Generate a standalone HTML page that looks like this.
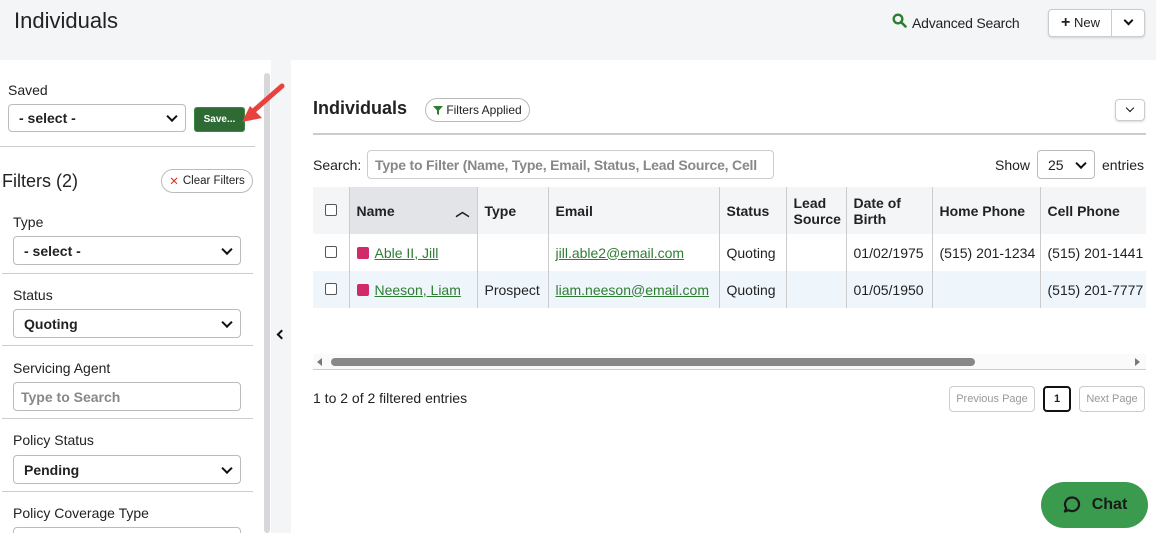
<!DOCTYPE html>
<html style="width:1156px;height:533px;overflow:hidden"><head><style>
*{box-sizing:border-box;margin:0;padding:0}
body{width:1156px;height:533px;overflow:hidden;background:#f4f5f7;font-family:"Liberation Sans",sans-serif;color:#222;position:relative;font-size:14px}
.a{position:absolute}
.sel{position:absolute;border:1px solid #bbb;border-radius:4px;background:#fff;font-weight:bold;font-size:14px;padding-left:10px;display:flex;align-items:center}
.sel:after{content:"";position:absolute;right:9px;top:50%;width:6px;height:6px;border-right:2px solid #111;border-bottom:2px solid #111;transform:translateY(-70%) rotate(45deg)}
.lbl{position:absolute;font-size:14px;color:#222}
.hr{position:absolute;height:1px;background:#ccc}
table{table-layout:fixed}
th,td{font-size:14px;text-align:left;padding:0 7px;border-left:1px solid #ccc;white-space:nowrap;overflow:hidden}
th{background:#f4f5f7;font-weight:bold;height:47px;line-height:16px}
td{height:37px}
tr.alt td{background:#eef6fc}
a{color:#2e7d32;text-decoration:underline}
.cb{display:inline-block;width:12px;height:12px;border:1px solid #555;border-radius:2px;background:#fff}
.sq{display:inline-block;width:12px;height:12px;background:#d12a6b;border-radius:2px;vertical-align:-1px;margin-right:6px}
.btn{position:absolute;border:1px solid #ccc;border-radius:4px;background:#fff;font-size:11px;color:#999;display:flex;align-items:center;justify-content:center}
</style></head><body>
<div class="a" style="left:14px;top:8px;font-size:22px;color:#222">Individuals</div>
<svg class="a" style="left:892px;top:13px" width="15" height="15" viewBox="0 0 15 15"><circle cx="6" cy="6" r="4.3" fill="none" stroke="#2e7d32" stroke-width="2.4"/><path d="M9 9l4.5 4.5" stroke="#2e7d32" stroke-width="2.6" stroke-linecap="round"/></svg>
<div class="a" style="left:912px;top:15px;font-size:14px;letter-spacing:-0.2px">Advanced Search</div>
<div class="a" style="left:1048px;top:9px;width:97px;height:28px;border:1px solid #ccc;border-radius:4px;background:#fff;box-shadow:0 1px 2px rgba(0,0,0,.15)">
 <div class="a" style="left:12px;top:4px;font-size:13px"><b style="font-size:16px">+</b> New</div>
 <div class="a" style="left:62px;top:0;width:1px;height:26px;background:#ccc"></div>
 <div class="a" style="left:76px;top:7px;width:7px;height:7px;border-right:2px solid #111;border-bottom:2px solid #111;transform:rotate(45deg)"></div>
</div>
<div class="a" style="left:0;top:60px;width:263px;height:473px;background:#fff"></div>
<div class="a" style="left:263px;top:60px;width:8px;height:473px;background:#fff"></div>
<div class="a" style="left:264px;top:73px;width:6px;height:460px;background:#d8d8dc;border-radius:3px"></div>
<div class="lbl" style="left:8px;top:82px">Saved</div>
<div class="sel" style="left:8px;top:104px;width:178px;height:28px">- select -</div>
<div class="a" style="left:194px;top:107px;width:51px;height:25px;background:#2e6b34;border:1px solid #3b8a42;border-radius:3px;color:#fff;font-size:10px;font-weight:bold;display:flex;align-items:center;justify-content:center">Save...</div>
<svg class="a" style="left:236px;top:80px" width="50" height="50"><path d="M46 6 L14 34" stroke="#e8413e" stroke-width="5" stroke-linecap="round"/><path d="M6 42 L26 38 L14 26 Z" fill="#e8413e"/></svg>
<div class="hr" style="left:0;top:146px;width:255px"></div>
<div class="a" style="left:2px;top:171px;font-size:18px">Filters (2)</div>
<div class="a" style="left:161px;top:169px;width:92px;height:24px;border:1px solid #bbb;border-radius:12px;font-size:11.5px;display:flex;align-items:center;justify-content:center"><span style="color:#d32;margin-right:4px">✕</span>Clear Filters</div>
<div class="lbl" style="left:13px;top:214px">Type</div>
<div class="sel" style="left:13px;top:236px;width:228px;height:29px">- select -</div>
<div class="hr" style="left:2px;top:273px;width:251px"></div>
<div class="lbl" style="left:13px;top:287px">Status</div>
<div class="sel" style="left:13px;top:309px;width:228px;height:29px">Quoting</div>
<div class="hr" style="left:2px;top:345px;width:251px"></div>
<div class="lbl" style="left:13px;top:360px">Servicing Agent</div>
<div class="a" style="left:13px;top:382px;width:228px;height:29px;border:1px solid #bbb;border-radius:4px;background:#fff;color:#888;font-weight:bold;padding:6px 7px">Type to Search</div>
<div class="hr" style="left:2px;top:418px;width:251px"></div>
<div class="lbl" style="left:13px;top:432px">Policy Status</div>
<div class="sel" style="left:13px;top:455px;width:228px;height:29px">Pending</div>
<div class="hr" style="left:2px;top:491px;width:251px"></div>
<div class="lbl" style="left:13px;top:505px">Policy Coverage Type</div>
<div class="a" style="left:13px;top:527px;width:228px;height:20px;border:1px solid #bbb;border-radius:4px;background:#fff"></div>
<div class="a" style="left:278px;top:331px;width:7px;height:7px;border-left:2px solid #111;border-bottom:2px solid #111;transform:rotate(45deg)"></div>
<div class="a" style="left:291px;top:60px;width:865px;height:473px;background:#fff"></div>
<div class="a" style="left:313px;top:98px;font-size:18px;font-weight:bold">Individuals</div>
<div class="a" style="left:425px;top:98px;width:105px;height:24px;border:1px solid #bbb;border-radius:12px;font-size:12px;display:flex;align-items:center;justify-content:center"><svg width="10" height="10" style="margin-right:3px"><path d="M0 1h10L6 5.5V10L4 9V5.5Z" fill="#2e7d32"/></svg>Filters Applied</div>
<div class="a" style="left:1115px;top:99px;width:30px;height:22px;border:1px solid #ccc;border-radius:4px;box-shadow:0 1px 2px rgba(0,0,0,.15)"><div class="a" style="left:11px;top:5px;width:6px;height:6px;border-right:1.5px solid #111;border-bottom:1.5px solid #111;transform:rotate(45deg)"></div></div>
<div class="a" style="left:313px;top:133px;width:833px;height:2px;background:#ccc"></div>
<div class="a" style="left:313px;top:157px">Search:</div>
<div class="a" style="left:367px;top:150px;width:407px;height:29px;border:1px solid #ccc;border-radius:4px;color:#888;font-weight:bold;padding:6px 7px;white-space:nowrap;overflow:hidden;letter-spacing:-0.2px">Type to Filter (Name, Type, Email, Status, Lead Source, Cell</div>
<div class="a" style="left:995px;top:157px">Show</div>
<div class="sel" style="left:1037px;top:150px;width:58px;height:29px;font-weight:normal">25</div>
<div class="a" style="left:1102px;top:157px">entries</div>
<div class="a" style="left:313px;top:187px;width:833px;height:125px;overflow:hidden">
<table style="border-collapse:collapse;width:840px">
<colgroup><col style="width:36px"><col style="width:128px"><col style="width:71px"><col style="width:171px"><col style="width:67px"><col style="width:60px"><col style="width:86px"><col style="width:108px"><col style="width:113px"></colgroup>
<tr><th style="border-left:none;text-align:center"><span class="cb"></span></th><th style="background:#e2e4e8">Name<span style="float:right;font-size:14px">︿</span></th><th>Type</th><th>Email</th><th>Status</th><th>Lead<br>Source</th><th>Date of<br>Birth</th><th>Home Phone</th><th>Cell Phone</th></tr>
<tr><td style="border-left:none;text-align:center"><span class="cb"></span></td><td><span class="sq"></span><a>Able II, Jill</a></td><td></td><td><a>jill.able2@email.com</a></td><td>Quoting</td><td></td><td>01/02/1975</td><td>(515) 201-1234</td><td>(515) 201-1441</td></tr>
<tr class="alt"><td style="border-left:none;text-align:center"><span class="cb"></span></td><td><span class="sq"></span><a>Neeson, Liam</a></td><td>Prospect</td><td><a>liam.neeson@email.com</a></td><td>Quoting</td><td></td><td>01/05/1950</td><td></td><td>(515) 201-7777</td></tr>
</table></div>
<div class="a" style="left:313px;top:354px;width:833px;height:16px;background:#fafafa;border-bottom:1px solid #ccc"></div>
<div class="a" style="left:317px;top:358px;width:0;height:0;border:4px solid transparent;border-right:5px solid #777;border-left:0"></div>
<div class="a" style="left:331px;top:358px;width:644px;height:8px;background:#888;border-radius:4px"></div>
<div class="a" style="left:1135px;top:358px;width:0;height:0;border:4px solid transparent;border-left:5px solid #777;border-right:0"></div>
<div class="a" style="left:313px;top:390px">1 to 2 of 2 filtered entries</div>
<div class="btn" style="left:949px;top:386px;width:86px;height:26px">Previous Page</div>
<div class="a" style="left:1043px;top:386px;width:28px;height:26px;border:2px solid #111;border-radius:4px;font-size:11px;font-weight:bold;display:flex;align-items:center;justify-content:center">1</div>
<div class="btn" style="left:1079px;top:386px;width:66px;height:26px">Next Page</div>
<div class="a" style="left:1041px;top:482px;width:107px;height:46px;background:#3a9b4e;border-radius:23px;display:flex;align-items:center;justify-content:center;font-weight:bold;font-size:16px;color:#1a1a1a"><svg width="20" height="20" viewBox="0 0 20 20" style="margin-right:10px"><path d="M10 2.5a7 6.8 0 1 1-3.6 12.6L3 16.5l1.2-3.4A7 6.8 0 0 1 10 2.5z" fill="none" stroke="#1a1a1a" stroke-width="2.2" stroke-linejoin="round"/></svg>Chat</div>
</body></html>
